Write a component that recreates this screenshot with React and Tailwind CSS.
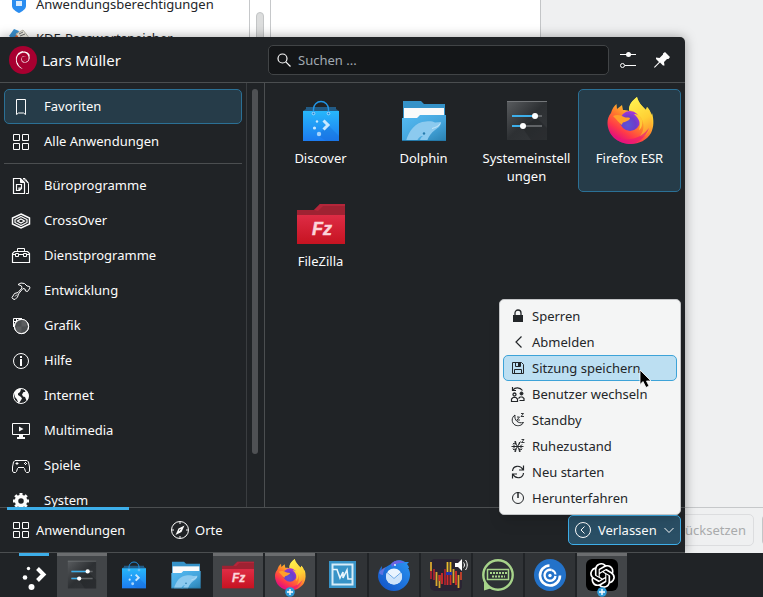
import { useState } from "react";
import { SiDebian, SiOpenai } from "react-icons/si";

function Icon({ size = 22, box = 22, children, className = "" }) {
  return (
    <svg
      width={size}
      height={size}
      viewBox={`0 0 ${box} ${box}`}
      fill="none"
      stroke="currentColor"
      className={`shrink-0 ${className}`}
      aria-hidden="true"
    >
      {children}
    </svg>
  );
}

/* ---------- category icons ---------- */

const BookmarkIcon = () => (
  <Icon>
    <path d="M6.500 3.500h9v15l-2-1.500h-5l-2 1.500z" />
  </Icon>
);

const GridIcon = () => (
  <Icon>
    <path d="M3.500 3.500h6v6h-6zM12.500 3.500h6v6h-6zM3.500 12.500h6v6h-6zM12.500 12.500h6v6h-6z" />
  </Icon>
);

const OfficeIcon = () => (
  <Icon>
    <path d="M3.500 3.500h7l4 4v11h-11z" strokeWidth="1.200" />
    <path d="M10.500 4v3.500h4z" fill="currentColor" />
    <path d="M13 3.500l5.500 5v10H16" />
    <path d="M13 3.500h2l3.500 4.500" />
    <path d="M6.500 9.500h5v4l-2 2h-3zM9 15.500V13h2.500" strokeWidth="1.200" />
  </Icon>
);

const CrossOverIcon = () => (
  <Icon>
    <path d="M11 4l8.500 4v6L11 18l-8.500-4V8z" strokeWidth="1.500" />
    <path d="M11 6.500l6 3v3L11 15.500l-6-3v-3z" strokeWidth="1.200" />
    <path d="M11 9l3.500 2-3.500 2-3.500-2z" strokeWidth="1.200" />
  </Icon>
);

const ToolboxIcon = () => (
  <Icon>
    <path d="M2.500 17.500v-9l2-2h13l2 2v9z" strokeWidth="1.200" />
    <path d="M7.500 6V3.500h7V6M3 9.500h2.500M8.500 9.500h5M16.500 9.500H19M5.500 8.500h3v3h-3zM13.500 8.500h3v3h-3z" />
  </Icon>
);

const HammerIcon = () => (
  <Icon>
    <path
      d="M8 4.500L11 3l3.500.5L17 6l2.500.5.5 1.500-2.500 3.500-2-.5-.5-2-2-.5-3 3.500L8.500 14l-1 3-2.500 2.500-2-.5-1-1.500 2.500-4 3.500-1 4-4.500L11.500 6z"
      strokeLinejoin="round"
    />
    <path d="M5 16.500l2-2" />
  </Icon>
);

const GraphicsIcon = () => (
  <Icon>
    <circle cx="11.500" cy="11.500" r="7" fill="#4b4e50" />
    <path d="M11.500 5h5v6.500h-5zM6.500 11.500h5v6h-5z" fill="#5b5d5f" stroke="none" />
    <circle cx="11.500" cy="11.500" r="7.200" />
    <path d="M3.500 12V3.500H12M6.500 3.500v3h-3" />
  </Icon>
);

const InfoIcon = () => (
  <Icon>
    <circle cx="11" cy="11" r="7.500" />
    <path d="M10 6h2v2h-2zM10 9h2v7h-2z" fill="currentColor" stroke="none" />
  </Icon>
);

const GlobeIcon = () => (
  <Icon>
    <circle cx="11" cy="11" r="7.500" />
    <path
      d="M4 8l2-3 4-1.500 1 1-1 2.500-2 1.500v1.500l3 2 1 1.500-2.500 4-1 1-1.500-4-2-2.500zM14 4l3 2 1.500 4-.5 4-1.500 1.500-1.500-3.500-2-.5-1-2 1.500-2.500h2z"
      fill="currentColor"
      stroke="none"
    />
  </Icon>
);

const MultimediaIcon = () => (
  <Icon>
    <path d="M2.500 3.500h17v11h-17z" />
    <path d="M9 6.500v5l4.500-2.500zM9 15h4v2h2v2H7v-2h2z" fill="currentColor" stroke="none" />
  </Icon>
);

const GamepadIcon = () => (
  <Icon>
    <path
      d="M5 5.500h12l1.500 1.500 1 5v4l-1 1.500h-2l-1-1-1-3-1-1h-5l-1 1-1 3-1 1h-2l-1-1.500v-4l1-5z"
      strokeLinejoin="round"
    />
    <path d="M5.500 8.500h3M7 7v3M8 12.500h2M12 12.500h2M14 8.500h1M16 8.500h1M15 7.500h1M15 9.500h1" />
  </Icon>
);

const GearIcon = () => (
  <Icon>
    <circle cx="11" cy="11" r="4.500" strokeWidth="3.500" />
    <path
      d="M11 3v3M11 16v3M3 11h3M16 11h3M5.300 5.300l2.200 2.200M14.500 14.500l2.200 2.200M5.300 16.700l2.200-2.200M14.500 7.500l2.200-2.200"
      strokeWidth="3"
    />
  </Icon>
);

const CompassIcon = () => (
  <Icon>
    <circle cx="11" cy="11" r="8.500" />
    <path d="M15.500 6.500l-3 6.500-6 3 3-6.500z" fill="currentColor" stroke="none" />
    <path d="M10 11.500l1.500-1" stroke="#202326" />
    <path d="M11 3v2M11 17v2M3 11h2M17 11h2" />
  </Icon>
);

/* ---------- application icons ---------- */

function DiscoverIcon({ size }) {
  return (
    <Icon size={size} box={48}>
      <defs>
        <linearGradient id="bag" x1="0" y1="0" x2="0" y2="1">
          <stop offset="0" stopColor="#27b7fb" />
          <stop offset="1" stopColor="#1c7bf0" />
        </linearGradient>
      </defs>
      <path d="M9 10h30v2l3 2v3H6v-3l3-2z" fill="#225b85" stroke="none" />
      <path d="M6 14h36v30H6z" fill="url(#bag)" stroke="none" />
      <path d="M31 28l11 11v5H29l-9-6 5-4z" fill="#1467d2" opacity=".3" stroke="none" />
      <path d="M16.500 16v-4a7.500 7.500 0 0 1 15 0v4" stroke="#2196e8" strokeWidth="1.400" />
      <circle cx="16.500" cy="16.500" r="1.300" fill="#1d7fd0" stroke="#a9dcff" />
      <circle cx="31.500" cy="16.500" r="1.300" fill="#1d7fd0" stroke="#a9dcff" />
      <path d="M26.500 23.500l4.500 4.500-4.500 4.500" stroke="#c9e8ff" strokeWidth="3" />
      <circle cx="20" cy="24.500" r="1.200" fill="#c9e8ff" stroke="none" />
      <circle cx="17.500" cy="31" r="1.600" fill="#c9e8ff" stroke="none" />
      <circle cx="22" cy="37" r="2.200" fill="#a5d3fc" stroke="none" />
    </Icon>
  );
}

function DolphinIcon({ size }) {
  return (
    <Icon size={size} box={48}>
      <defs>
        <linearGradient id="folder" x1="0" y1="0" x2="1" y2="1">
          <stop offset="0" stopColor="#55bbf3" />
          <stop offset=".6" stopColor="#43a3da" />
          <stop offset="1" stopColor="#2980b0" />
        </linearGradient>
      </defs>
      <path d="M3 4h18l3 3h21v20H3z" fill="#3592c8" stroke="none" />
      <path d="M4 11h40v14H4z" fill="#fafafa" stroke="none" />
      <path d="M2 21h15l3-3h26v26H2z" fill="url(#folder)" stroke="none" />
      <path
        d="M6 44c3-10 9-19 20-19.500 4-.5 7 0 9 1l6-.5c.5 3-3 6-6 8-4 3-6 6-8 11z"
        fill="#8ccaef"
        stroke="none"
      />
      <path d="M40 26.500c-1 3-5 4-8 5" stroke="#d4edfb" strokeWidth=".8" />
      <path d="M17 44c1-3 3-5 6-5-2 1-3 3-3 5z" fill="#4ba9dd" stroke="none" />
      <circle cx="24" cy="36.500" r="1.200" fill="#287cad" stroke="none" />
      <path d="M2 43.500h44" stroke="#2478a8" />
    </Icon>
  );
}

function SettingsIcon({ size }) {
  return (
    <Icon size={size} box={48}>
      <defs>
        <linearGradient id="slate" x1="0" y1="0" x2="1" y2="1">
          <stop offset="0" stopColor="#595c5f" />
          <stop offset=".5" stopColor="#2d3033" />
          <stop offset="1" stopColor="#34373a" />
        </linearGradient>
      </defs>
      <path d="M4 4h40v39H4z" fill="url(#slate)" stroke="none" />
      <path d="M4 4.500h40" stroke="#74777a" />
      <path d="M34 21l10 10v12H28l-9-13z" fill="#1d2023" opacity=".4" stroke="none" />
      <path d="M9 19h30M9 29h30" stroke="#606366" strokeWidth="2" />
      <path d="M9 19h23M9 29h11" stroke="#3daee9" strokeWidth="2" />
      <circle cx="32" cy="19" r="3" fill="#fff" stroke="none" />
      <circle cx="20" cy="29" r="3" fill="#fff" stroke="none" />
    </Icon>
  );
}

function FirefoxIcon({ size }) {
  return (
    <Icon size={size} box={48}>
      <defs>
        <linearGradient id="fire" x1=".85" y1=".1" x2=".3" y2=".95">
          <stop offset="0" stopColor="#fff14a" />
          <stop offset=".3" stopColor="#ffc42e" />
          <stop offset=".55" stopColor="#ff7d2c" />
          <stop offset=".8" stopColor="#ff3a48" />
          <stop offset="1" stopColor="#e3107c" />
        </linearGradient>
        <linearGradient id="flame" x1=".3" y1="0" x2=".6" y2="1">
          <stop offset="0" stopColor="#fff250" />
          <stop offset=".6" stopColor="#ffd035" />
          <stop offset="1" stopColor="#ff9430" />
        </linearGradient>
        <radialGradient id="world" cx=".4" cy=".7" r=".8">
          <stop offset="0" stopColor="#5a55d8" />
          <stop offset=".5" stopColor="#6d3cc9" />
          <stop offset="1" stopColor="#b833e1" />
        </radialGradient>
      </defs>
      <path
        d="M5 16c1-4 3-7 5.500-9l.5 5 5-4 1 5c2 0 4 0 6 1 0-6 3-10 8-14 1 5 5 9 9 13l1-3c3 3 4 6 4 8l1-2c2 7 2 14-1 20-4 7-12 11-20 11C11 47 1.500 37 1.500 26c0-4 1-7 3.500-10z"
        fill="url(#fire)"
        stroke="none"
      />
      <path
        d="M23 13c0-6 3-9 8-13 1 5 5 9 9 13l1-3c3 3 4 6 4 8 2 7 0 14-4 19-3 3-5 3-7 2 4-5 5-12 1-18-3-4-7-7-12-8z"
        fill="url(#flame)"
        stroke="none"
      />
      <circle cx="24" cy="24" r="10" fill="url(#world)" stroke="none" />
      <path
        d="M7 19c4-2 8-1 11 1 2 1 4 0 6 1 0 2-3 3-5 4-2 0-3 1-3 3-3-2-5-5-9-9z"
        fill="#ffa02b"
        stroke="none"
      />
      <path d="M28 17c4 0 7 2 8 6 1 5-1 9-3 10 2-5 1-11-5-16z" fill="#ffc936" stroke="none" />
      <path d="M3 34c5 7 13 10 22 8 8-1 14-6 18-11-3 9-11 16-19 16-9 0-17-5-21-13z" fill="#e9157c" opacity=".65" stroke="none" />
    </Icon>
  );
}

function FileZillaIcon({ size }) {
  return (
    <Icon size={size} box={48}>
      <defs>
        <linearGradient id="red" x1="0" y1="0" x2="0" y2="1">
          <stop offset="0" stopColor="#de2c45" />
          <stop offset="1" stopColor="#c61321" />
        </linearGradient>
      </defs>
      <path d="M0 10h17l6-6h25v12H0z" fill="#9f2232" stroke="none" />
      <path d="M17 10l6-6h25v2H26l-5 5z" fill="#b5263a" stroke="none" />
      <path d="M0 15h48v29H0z" fill="url(#red)" stroke="none" />
      <text
        x="15"
        y="35"
        fontSize="18"
        fill="#fcd5da"
        stroke="#fcd5da"
        strokeWidth=".5"
        fontFamily="Liberation Sans, sans-serif"
        fontStyle="italic"
        fontWeight="bold"
      >
        Fz
      </text>
    </Icon>
  );
}

const LauncherIcon = () => (
  <Icon size={32} box={32} className="text-white">
    <path d="M19.500 9.500l6 6-6 6" strokeWidth="4" />
    <circle cx="10.500" cy="9.500" r="1.700" fill="currentColor" stroke="none" />
    <circle cx="7" cy="18.500" r="2.300" fill="currentColor" stroke="none" />
    <circle cx="13.500" cy="28" r="3" fill="currentColor" stroke="none" />
  </Icon>
);

const VirtManagerIcon = () => (
  <Icon size={32} box={32}>
    <path d="M3 2h27v27H3z" fill="#3793c7" stroke="none" />
    <path d="M6.500 5.500h20v20h-20z" stroke="#d6ecf8" strokeWidth="2" />
    <path d="M7 10.500h4l3 8.500 3-6v6l4-8 1 9h4" stroke="#e8f5fc" strokeWidth="1.600" />
  </Icon>
);

const ThunderbirdIcon = () => (
  <Icon size={32} box={32}>
    <defs>
      <linearGradient id="bird" x1="0" y1="1" x2="1" y2="0">
        <stop offset="0" stopColor="#1250c4" />
        <stop offset="1" stopColor="#2a95f2" />
      </linearGradient>
    </defs>
    <path
      d="M13 5c3-4 10-5 14-2l4 0-2 2c1 1 2 3 2 4h-1c3 4 2 9 1 12-2 6-8 11-15 11C8 32 1 26 0 18c0-4 1-8 4-11 0 2 0 3-1 5l5-4z"
      fill="url(#bird)"
      stroke="none"
    />
    <path d="M13 5c4-5 11-4 14-1-5-1-10 1-13 4z" fill="#6a62e2" stroke="none" />
    <path d="M1 14c1-3 4-5 7-6-2 3-3 5-3 8-2 0-3-1-4-2z" fill="#7b78e6" opacity=".7" stroke="none" />
    <circle cx="17" cy="6" r=".9" fill="#fff" stroke="none" />
    <circle cx="16" cy="17.500" r="8" fill="#eaf4fe" stroke="none" />
    <path d="M8.500 14l7.500 6 7.500-6c2 6-1 11-7.500 11.500C9.500 25 7 20 8.500 14z" fill="#cfe4fa" stroke="none" />
    <path d="M9 13.500l7 6 7-6" stroke="#6ea9e6" />
  </Icon>
);

// x, top, bottom, colour of each level bar
const levelBars = [
  [1, 3, 12, "#d9a72f"],
  [1, 12, 20, "#a82330"],
  [4, 10, 21, "#a82330"],
  [6.5, 13, 27, "#d9a72f"],
  [9.5, 16, 29, "#d9a72f"],
  [9.5, 16, 22, "#d32b2b"],
  [12, 14, 25, "#d32b2b"],
  [15, 10, 26, "#a82330"],
  [17.5, 3, 14, "#e9bd2e"],
  [17.5, 16, 26, "#d32b2b"],
  [20.5, 3, 14, "#e9bd2e"],
  [20.5, 16, 26, "#d32b2b"],
  [23.5, 10, 24, "#d9a72f"],
  [26, 12, 26, "#d32b2b"],
  [28.5, 16, 29, "#d9a72f"],
  [31, 13, 21, "#c9442b"],
];

const AudioIcon = () => (
  <span className="relative">
    <Icon size={32} box={32}>
      <rect width="32" height="32" rx="5" fill="#2a2433" stroke="none" />
      {levelBars.map(([x, top, bottom, color], i) => (
        <path key={i} d={`M${x} ${top}V${bottom}`} stroke={color} strokeWidth="1.800" />
      ))}
      <path d="M16 14.500h6" stroke="#2436a8" strokeWidth="3" />
    </Icon>
    <Icon size={14} box={14} className="absolute -top-px left-[25px] text-white">
      <path d="M0 5h3l4-4v12L3 9H0z" fill="currentColor" stroke="none" />
      <path d="M8.500 4.500c1.300 1.500 1.300 3.500 0 5M10.500 2c2.300 3 2.300 7 0 10" />
    </Icon>
  </span>
);

const KeyboardIcon = () => (
  <Icon size={32} box={32}>
    <path d="M2 31.500V23l8 6z" fill="#a7d48a" stroke="none" />
    <circle cx="16" cy="16" r="14.700" fill="#2d3134" stroke="#a7d48a" strokeWidth="2.400" />
    <rect x="5.500" y="10.500" width="21" height="10" stroke="#a7d48a" strokeWidth="1.500" />
    <path d="M8 14h17" stroke="#a7d48a" strokeWidth="2" strokeDasharray="2 1" />
    <path d="M10 17.500h13" stroke="#a7d48a" strokeWidth="2" strokeDasharray="2 1" />
  </Icon>
);

const WebWorkspaceIcon = () => (
  <Icon size={32} box={32}>
    <circle cx="16" cy="16" r="16" fill="#2372c9" stroke="none" />
    <path d="M15.500 6.500a10 10 0 1 0 10.500 10" stroke="#fff" strokeWidth="2.600" />
    <path d="M17.500 11a5.500 5.500 0 1 0 4 6" stroke="#fff" strokeWidth="2.400" />
    <path d="M17.500 11c2.200.6 3.800 2.500 4 4.500" stroke="#fff" strokeWidth="2" />
    <circle cx="16" cy="16.500" r="1.700" fill="#fff" stroke="none" />
  </Icon>
);

const ChatIcon = () => (
  <span className="flex h-8 w-8 items-center justify-center rounded-md bg-black text-white">
    <SiOpenai size={25} />
  </span>
);

/* ---------- session menu icons ---------- */

function SmallIcon({ children }) {
  return <Icon size={16} box={16}>{children}</Icon>;
}

const sessionActions = [
  {
    label: "Sperren",
    icon: (
      <SmallIcon>
        <path d="M3 7h10v7H3z" fill="currentColor" stroke="none" />
        <path d="M5 7V5a3 3 0 0 1 6 0v2" strokeWidth="1.300" />
      </SmallIcon>
    ),
  },
  {
    label: "Abmelden",
    icon: (
      <SmallIcon>
        <path d="M11.500 2.500L6 8l5.500 5.500" strokeWidth="1.200" />
      </SmallIcon>
    ),
  },
  {
    label: "Sitzung speichern",
    icon: (
      <SmallIcon>
        <path d="M2.500 2.500h9l2 2v9h-11z" />
        <path d="M5.500 3v3.500h5V3M4.500 13V9.500h7V13" />
        <path d="M8 3h2v3H8z" fill="currentColor" stroke="none" />
      </SmallIcon>
    ),
  },
  {
    label: "Benutzer wechseln",
    icon: (
      <SmallIcon>
        <path d="M2.500 1v3.500H6M3 4c2-3 7-3 9.500.5" strokeWidth="1.200" />
        <circle cx="4.500" cy="8.500" r="1.500" strokeWidth="1.300" />
        <circle cx="11.500" cy="7.500" r="1.500" fill="currentColor" />
        <path d="M1.500 15.500V13l1.500-1.500h3L7.500 13v2.500zM8.500 12.500L10 11h2.500l1.500 1.500v2H9.500" strokeWidth="1.200" />
      </SmallIcon>
    ),
  },
  {
    label: "Standby",
    icon: (
      <SmallIcon>
        <path d="M5 3C1 5.500 1.500 11 5 13c3 1.500 7 .5 8.500-2.500C8 12 4 8 5 3z" />
        <path d="M7 5h2.500L7 8h3M11 1.500h2.500l-2.500 3h3" strokeWidth=".9" />
      </SmallIcon>
    ),
  },
  {
    label: "Ruhezustand",
    icon: (
      <SmallIcon>
        <path d="M1.500 8.500h12M4.500 3.500l6 10M10.500 3.500l-6 10M3 6.500l2 2-2 2M12 6.500l-2 2 2 2M5.500 3l.5 3-3-.5M5.500 14l.5-3-3 .5M9.500 14L9 11l3 .5M9.500 4l-.5 2.500" />
        <path d="M11.500 1.500h2.500l-2.500 3h3" strokeWidth=".9" />
      </SmallIcon>
    ),
  },
  {
    label: "Neu starten",
    icon: (
      <SmallIcon>
        <path d="M2.500 7C3 1.500 10 .5 13 5.500M13.500 1.500v4.500H9M13.500 9C13 14.500 6 15.500 3 10.500M2.500 14.500V10H7" strokeWidth="1.200" />
      </SmallIcon>
    ),
  },
  {
    label: "Herunterfahren",
    icon: (
      <SmallIcon>
        <circle cx="8" cy="8" r="5.500" />
        <path d="M8 2v6" strokeWidth="1.500" />
      </SmallIcon>
    ),
  },
];

const mainCategories = [
  { label: "Favoriten", icon: <BookmarkIcon /> },
  { label: "Alle Anwendungen", icon: <GridIcon /> },
];

const categories = [
  { label: "Büroprogramme", icon: <OfficeIcon /> },
  { label: "CrossOver", icon: <CrossOverIcon /> },
  { label: "Dienstprogramme", icon: <ToolboxIcon /> },
  { label: "Entwicklung", icon: <HammerIcon /> },
  { label: "Grafik", icon: <GraphicsIcon /> },
  { label: "Hilfe", icon: <InfoIcon /> },
  { label: "Internet", icon: <GlobeIcon /> },
  { label: "Multimedia", icon: <MultimediaIcon /> },
  { label: "Spiele", icon: <GamepadIcon /> },
  { label: "System", icon: <GearIcon /> },
];

const favorites = [
  { label: "Discover", icon: <DiscoverIcon size={48} /> },
  { label: "Dolphin", icon: <DolphinIcon size={48} /> },
  { label: "Systemeinstellungen", icon: <SettingsIcon size={48} /> },
  { label: "Firefox ESR", icon: <FirefoxIcon size={48} />, selected: true },
  { label: "FileZilla", icon: <FileZillaIcon size={48} /> },
];

const tasks = [
  { label: "Systemeinstellungen", icon: <SettingsIcon size={34} />, state: "active" },
  { label: "Discover", icon: <DiscoverIcon size={32} />, state: "pinned" },
  { label: "Dolphin", icon: <DolphinIcon size={32} />, state: "pinned" },
  { label: "FileZilla", icon: <FileZillaIcon size={32} />, state: "active" },
  { label: "Firefox ESR", icon: <FirefoxIcon size={32} />, state: "active", grouped: true },
  { label: "Virtual Machine Manager", icon: <VirtManagerIcon />, state: "open" },
  { label: "Thunderbird", icon: <ThunderbirdIcon />, state: "open" },
  { label: "Audio", icon: <AudioIcon />, state: "open" },
  { label: "Tastatur", icon: <KeyboardIcon />, state: "open" },
  { label: "Workspace", icon: <WebWorkspaceIcon />, state: "open" },
  { label: "ChatGPT", icon: <ChatIcon />, state: "active", grouped: true },
];

const taskStyles = {
  active: "border-t-[#6b6d6f] bg-[#424548]",
  open: "border-t-[#303336] bg-[#303336]",
  pinned: "border-t-transparent",
};

function CategoryItem({ item, selected, onSelect }) {
  return (
    <li>
      <button
        onClick={() => onSelect(item.label)}
        className={`flex h-[35px] w-full items-center gap-3 rounded-[5px] border px-[5px] pt-px text-left ${
          selected ? "border-[#2b7095] bg-[#263c49]" : "border-transparent"
        }`}
      >
        {item.icon}
        <span className="pb-[2px]">{item.label}</span>
      </button>
    </li>
  );
}

function SettingsWindow() {
  return (
    <div className="flex h-full flex-col bg-[#eff0f1] text-[#232629]">
      <div className="flex min-h-0 flex-1">
        <ul className="w-[250px] border-r border-[#c6c8ca] bg-white">
          <li className="flex h-[21px] items-start gap-[9px] pl-[11px]">
            <Icon size={16} box={16}>
              <path d="M1 0h14v6c0 3-4 5.500-7 7-3-1.500-7-4-7-7z" fill="#2a8df0" stroke="none" />
              <path d="M5 1h6v5H5z" fill="#d9ecff" stroke="none" />
            </Icon>
            <span className="-mt-[6px] leading-5">Anwendungsberechtigungen</span>
          </li>
          <li className="flex h-[34px] items-center gap-[5px] pl-[9px]">
            <Icon size={22} box={22}>
              <path d="M0 9l5-7 5 2-4 10z" fill="#3a8fcd" stroke="none" />
              <path d="M7 7l7-4 7 9-8 8z" fill="#f0eee4" stroke="#b9b6a8" />
              <path d="M10 7l4-2M11 9l5-2" stroke="#6d6d6d" />
              <path d="M3 12l5-4 2 3z" fill="#e0602c" stroke="none" />
            </Icon>
            KDE-Passwortspeicher
          </li>
        </ul>
        <div className="w-[21px] border-r border-[#c6c8ca] bg-white px-[6px] pt-3">
          <div className="h-full w-2 rounded-full border border-[#c3c5c6] bg-[#dcdddd]" />
        </div>
        <div className="w-[270px] border-r border-[#c3c5c7] bg-white" />
      </div>
      <footer className="flex h-[46px] items-start justify-end gap-2 overflow-hidden border-t border-[#c6c8ca] pt-[6px]">
        <button disabled className="h-8 rounded-[5px] border border-[#dcdddf] px-[7px] text-[#a9abac]">
          Zurücksetzen
        </button>
        <button disabled aria-label="Anwenden" className="-mr-[31px] h-8 w-8 rounded-[5px] border border-[#c3c5c7]" />
      </footer>
    </div>
  );
}

function SessionMenu() {
  return (
    <ul
      role="menu"
      className="absolute right-0 bottom-full w-[182px] rounded-[5px] border border-[#c2c4c6] bg-[#f4f5f5] p-[3px] text-[#232629] shadow-lg"
    >
      {sessionActions.map((action) => {
        const hovered = action.label === "Sitzung speichern";
        return (
          <li key={action.label} role="none" className="relative">
            <button
              role="menuitem"
              className={`flex h-[26px] w-full items-center gap-[6px] rounded-[5px] border px-[6px] text-left ${
                hovered ? "border-[#3da3d8] bg-[#bcdff2]" : "border-transparent"
              }`}
            >
              {action.icon}
              {action.label}
            </button>
            {hovered && (
              <svg className="absolute top-[14px] left-[136px] z-10" width="14" height="21" viewBox="0 0 14 21" aria-hidden="true">
                <path d="M1 1v14.500l3-3 3 6 3-1.500-2.500-5H12z" fill="#000" stroke="#fff" strokeWidth=".8" />
              </svg>
            )}
          </li>
        );
      })}
    </ul>
  );
}

function Launcher() {
  const [category, setCategory] = useState("Favoriten");
  const [query, setQuery] = useState("");

  return (
    <div className="absolute top-[37px] bottom-0 left-0 flex w-[685px] max-w-full flex-col rounded-tr-[5px] border-b border-[#4b4e50] bg-[#202326] text-[#fcfcfc] shadow-[0_0_12px_rgba(0,0,0,0.35)]">
      <header className="flex h-[46px] shrink-0 items-center border-b border-[#4b4e50] pr-3 pl-[9px]">
        <div className="flex w-[259px] items-center gap-[5px]">
          <span className="flex h-7 w-7 items-center justify-center rounded-full bg-[#a80030]">
            <SiDebian size={18} />
          </span>
          <h1 className="text-[15px]">Lars Müller</h1>
        </div>
        <label className="flex h-[30px] flex-1 items-center gap-[6px] rounded-[5px] border border-[#414446] bg-[#141618] px-[7px]">
          <Icon size={16} box={16}>
            <circle cx="6.500" cy="6.500" r="4.500" strokeWidth="1.200" />
            <path d="M9.800 9.800l4.700 4.700" strokeWidth="1.200" />
          </Icon>
          <input
            type="search"
            aria-label="Suchen"
            placeholder="Suchen ..."
            className="w-full bg-transparent outline-none placeholder:text-[#a1a9b1]"
            value={query}
            onChange={(e) => setQuery(e.target.value)}
          />
        </label>
        <button aria-label="Einrichten" className="ml-2">
          <Icon>
            <path d="M3 5.500h16M8 16.500h11" />
            <circle cx="11.500" cy="5.500" r="2.500" fill="currentColor" stroke="none" />
            <circle cx="5.500" cy="16.500" r="2" />
          </Icon>
        </button>
        <button aria-label="Geöffnet lassen" className="ml-3">
          <Icon>
            <path
              d="M14 3l5 5-1.500 2h-1.500l-3 3 .5 3.500-1.500 0-3-3L4 18.500H3V18l5-5-3-3V8.500l3.500.5 3.500-3.500V4.500z"
              fill="currentColor"
              stroke="none"
            />
          </Icon>
        </button>
      </header>

      <div className="flex min-h-0 flex-1">
        <nav className="w-[247px] overflow-hidden border-r border-[#3a3d40] px-1 pt-[6px]">
          <ul>
            {mainCategories.map((item) => (
              <CategoryItem key={item.label} item={item} selected={item.label === category} onSelect={setCategory} />
            ))}
          </ul>
          <hr className="my-1 border-[#4b4e50]" />
          <ul>
            {categories.map((item) => (
              <CategoryItem key={item.label} item={item} selected={item.label === category} onSelect={setCategory} />
            ))}
          </ul>
        </nav>
        <div className="w-[18px] border-r border-[#4b4e50] px-[5px] pt-[6px] pb-[53px]">
          <div className="h-full w-[6px] rounded-full bg-[#4f5154]" />
        </div>
        <ul className="grid flex-1 auto-rows-[103px] grid-cols-4 px-1 pt-[6px]">
          {favorites.map((app) => (
            <li key={app.label}>
              <button
                className={`flex h-full w-full flex-col items-center gap-1 rounded-[5px] border px-1 pt-[7px] text-center leading-[18px] ${
                  app.selected ? "border-[#2b7095] bg-[#263c49]" : "border-transparent"
                }`}
              >
                {app.icon}
                <span className="max-w-[88px] break-all">{app.label}</span>
              </button>
            </li>
          ))}
        </ul>
      </div>

      <footer className="flex h-[45px] shrink-0 items-center border-t border-[#4b4e50] pr-1">
        <div role="tablist" className="flex flex-1 self-stretch pl-[7px]">
          <button
            role="tab"
            aria-selected="true"
            className="-mt-px flex w-[122px] items-center gap-1 border-t-3 border-[#3daee9] pb-[2px] pl-[3px]"
          >
            <GridIcon />
            Anwendungen
          </button>
          <button role="tab" aria-selected="false" className="ml-[40px] flex items-center gap-1">
            <CompassIcon />
            Orte
          </button>
        </div>
        <div className="relative">
          <button className="flex h-[30px] w-[113px] items-center gap-1 rounded-[5px] border border-[#3daee9] bg-[#2a4f65] px-[3px]">
            <Icon>
              <circle cx="11" cy="11" r="7.500" />
              <path d="M12.500 7.500L9 11l3.500 3.500" />
            </Icon>
            <span className="flex-1 text-left">Verlassen</span>
            <Icon size={16} box={16}>
              <path d="M3.500 6L8 10.500 12.500 6" />
            </Icon>
          </button>
          <SessionMenu />
        </div>
      </footer>
    </div>
  );
}

function TaskBar() {
  return (
    <div className="z-10 flex h-11 gap-[2px] bg-[#202326] pl-[9px] text-white">
      <button aria-label="Anwendungsstarter" className="relative flex w-[46px] items-center justify-center pl-1">
        <span className="absolute top-0 left-[10px] h-[3px] w-[30px] bg-[#3daee9]" />
        <LauncherIcon />
      </button>
      {tasks.map((task) => (
        <button
          key={task.label}
          aria-label={task.label}
          className={`relative flex w-[50px] items-center justify-center border-t-3 pb-[3px] ${taskStyles[task.state]}`}
        >
          {task.icon}
          {task.grouped && (
            <Icon size={10} box={10} className="absolute bottom-0 left-5">
              <circle cx="5" cy="5" r="4.800" fill="#2f9bd8" stroke="none" />
              <path d="M5 2v6M2 5h6" stroke="#fff" strokeWidth="1.400" />
            </Icon>
          )}
        </button>
      ))}
    </div>
  );
}

export default function App() {
  return (
    <div className="flex h-screen flex-col overflow-hidden font-['Noto_Sans',sans-serif] text-[13px] leading-5">
      <main className="relative min-h-0 flex-1">
        <SettingsWindow />
        <Launcher />
      </main>
      <TaskBar />
    </div>
  );
}
